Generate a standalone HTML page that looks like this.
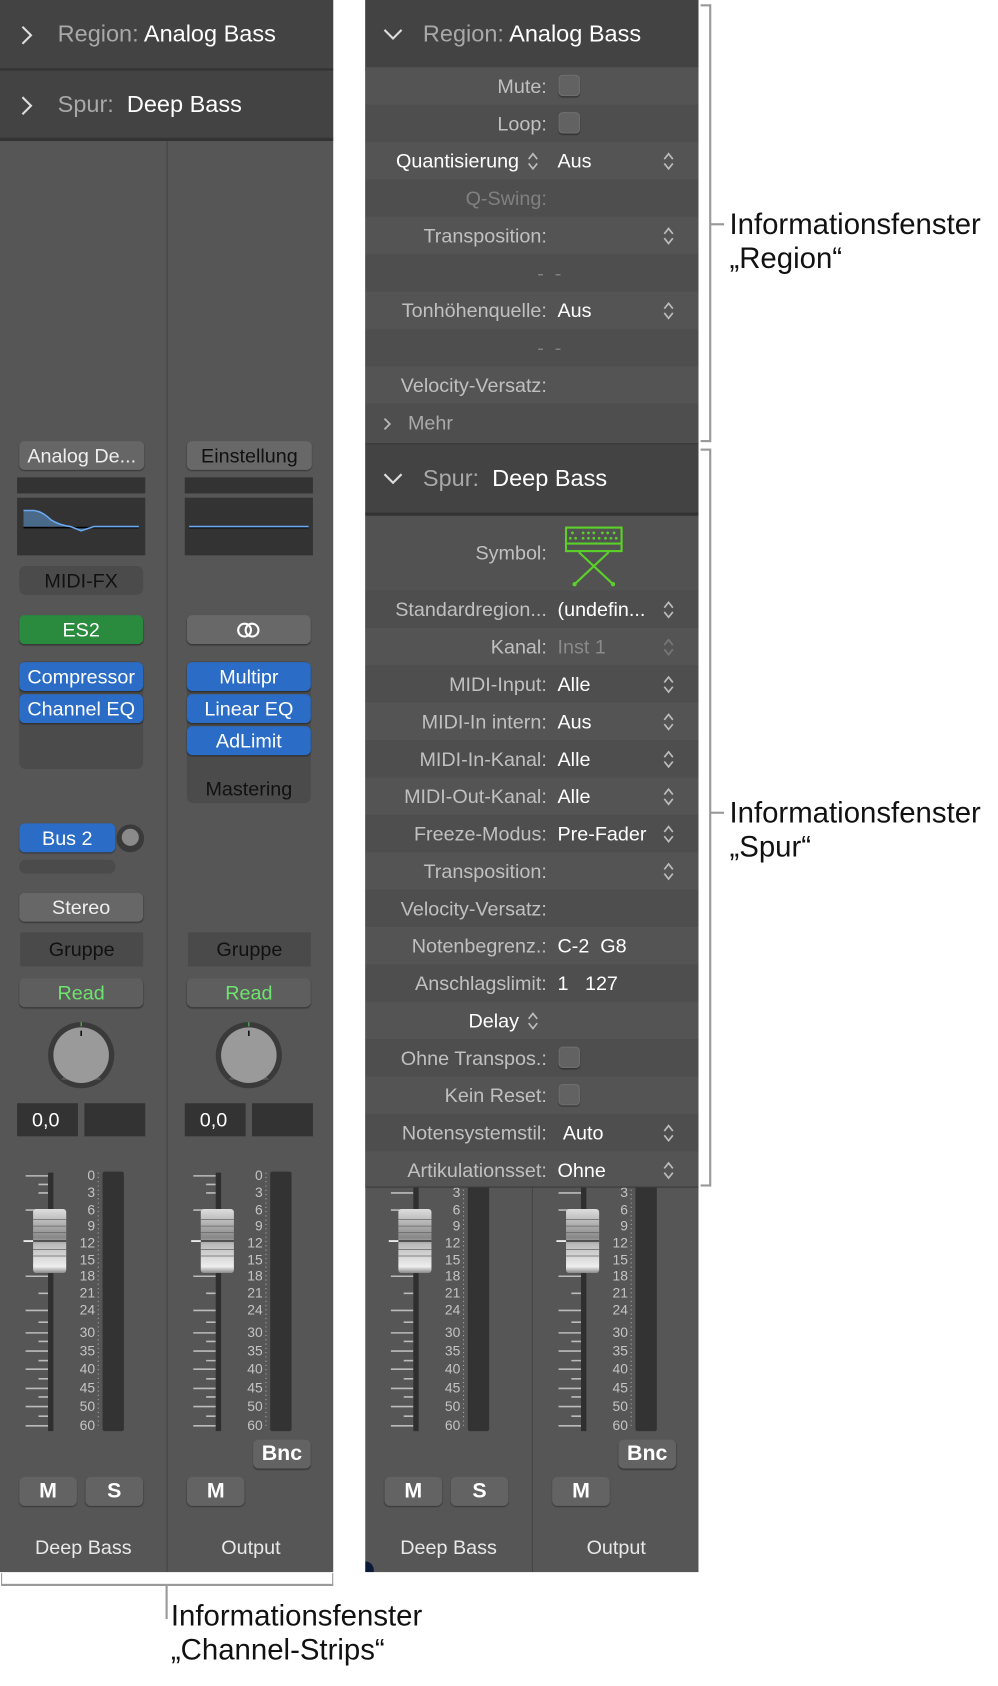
<!DOCTYPE html>
<html><head><meta charset="utf-8">
<style>
html,body{margin:0;padding:0;background:#fff;width:998px;height:1676px;overflow:hidden}
#s{position:absolute;left:0;top:0;width:940px;height:1579px;transform:scale(1.068);transform-origin:0 0;font-family:"Liberation Sans","DejaVu Sans",sans-serif}
.a{position:absolute}
.panel{position:absolute;top:0;width:312px;height:1472px;background:#565656;overflow:hidden}
.hd{position:absolute;left:0;width:312px;background:#434343;color:#fff;font-size:22px;border-bottom:2px solid #333;box-sizing:border-box}
.hd .t{position:absolute;left:54px;top:50%;transform:translateY(-50%);white-space:nowrap}
.hd .g{color:#a8a8a8}
.btn{position:absolute;border-radius:5px;text-align:center;font-size:18.5px;line-height:27px;height:27px;box-shadow:0 1px 1px rgba(0,0,0,.35);white-space:nowrap;overflow:hidden}
.gr{background:#686868;color:#111}
.dk{background:#333;position:absolute}
.bl{background:#2a6cc6;color:#fff}
.box{position:absolute;background:#4b4b4b;border-radius:6px}
.lbl{position:absolute;color:#e8e8e8;font-size:18.5px;text-align:center}
.row{position:absolute;left:0;width:312px;height:35px;font-size:18.5px;line-height:35px}
.row .l{position:absolute;right:142px;color:#c0c0c0;white-space:nowrap}
.row .v{position:absolute;left:180px;color:#fff;white-space:nowrap}
.row .dim{color:#808080}
.cb{position:absolute;left:181px;top:7px;width:20px;height:20px;border-radius:4px;background:#626262;box-shadow:inset 0 0 0 1px #6e6e6e,0 1px 1px #333}
.st{position:absolute;left:278px;top:9px}
.ann{position:absolute;font-size:27.5px;color:#111;line-height:32px;white-space:nowrap}
</style></head><body><div id="s">

<!-- ============ LEFT PANEL ============ -->
<div class="panel" style="left:0">
  <div class="a" style="left:156px;top:130px;width:1px;height:1342px;background:#444"></div>
  <div class="hd" style="top:0;height:66px"><svg class="a" style="left:18px;top:23px" width="14" height="20"><path d="M3 2 L11 10 L3 18" fill="none" stroke="#ddd" stroke-width="2"/></svg><div class="t"><span class="g">Region: </span>Analog Bass</div></div>
  <div class="hd" style="top:66px;height:66px;border-bottom:3px solid #333"><svg class="a" style="left:18px;top:23px" width="14" height="20"><path d="M3 2 L11 10 L3 18" fill="none" stroke="#ddd" stroke-width="2"/></svg><div class="t"><span class="g">Spur: </span>&nbsp;Deep Bass</div></div>

  <!-- strip 1 -->
  <div class="btn gr" style="left:18px;top:413px;width:117px;color:#eee;background:#666">Analog De...</div>
  <div class="dk" style="left:16px;top:447px;width:120px;height:15px"></div>
  <div class="dk" style="left:16px;top:466px;width:120px;height:54px"></div>
  <svg class="a" style="left:16px;top:466px" width="120" height="54"><path d="M6 12 L16 12 Q24 13 32 21 Q40 26 50 27 L60 31 Q66 29 72 27 L114 27 L114 28 L6 28Z" fill="#4a6a8a"/><path d="M6 28 L114 28" stroke="#000" stroke-width="1.5"/><path d="M6 12 L16 12 Q24 13 32 21 Q40 26 50 27 L60 31 Q66 29 72 27 L114 27" fill="none" stroke="#6aa8f0" stroke-width="1.5"/></svg>
  <div class="box" style="left:18px;top:530px;width:116px;height:27px;text-align:center;font-size:18.5px;line-height:27px;color:#111">MIDI-FX</div>
  <div class="btn" style="left:18px;top:576px;width:116px;background:#2a8a3e;color:#fff">ES2</div>
  <div class="box" style="left:18px;top:619px;width:116px;height:101px"></div>
  <div class="btn bl" style="left:18px;top:620px;width:116px">Compressor</div>
  <div class="btn bl" style="left:18px;top:650px;width:116px">Channel EQ</div>
  <div class="btn bl" style="left:18px;top:771px;width:90px">Bus 2</div>
  <div class="a" style="left:109px;top:772px;width:26px;height:26px;border-radius:50%;background:#3a3a3a"></div>
  <div class="a" style="left:114px;top:776px;width:16px;height:16px;border-radius:50%;background:#8a8a8a"></div>
  <div class="box" style="left:18px;top:805px;width:90px;height:13px;border-radius:6px"></div>
  <div class="btn" style="left:18px;top:836px;width:116px;background:#676767;color:#eee">Stereo</div>
  <div class="a" style="left:19px;top:873px;width:115px;height:32px;background:#4a4a4a;color:#111;font-size:18.5px;line-height:32px;text-align:center">Gruppe</div>
  <div class="btn" style="left:18px;top:916px;width:116px;background:#5e5e5e;color:#6ee46e">Read</div>
  <svg class="a" style="left:44px;top:956px" width="64" height="64"><circle cx="32" cy="32" r="31" fill="#3a3a3a"/><path d="M13 55 L22 46 A 18 18 0 0 0 42 46 L51 55 Z" fill="#565656"/><circle cx="32" cy="32" r="26" fill="#9a9a9a"/><line x1="32" y1="9" x2="32" y2="14" stroke="#111" stroke-width="1.5"/><line x1="32" y1="1" x2="32" y2="5" stroke="#5c5"/></svg>
  <div class="dk" style="left:16px;top:1033px;width:57px;height:31px;color:#fff;font-size:18.5px;line-height:31px;padding-left:14px;box-sizing:border-box">0,0</div>
  <div class="dk" style="left:79px;top:1033px;width:57px;height:31px"></div>
  <svg class="a" style="left:0;top:1090px" width="156" height="260">
    <g stroke="#bbb" stroke-width="1.5"><line x1="24" y1="11" x2="45" y2="11"/><line x1="36" y1="19" x2="45" y2="19"/><line x1="36" y1="27" x2="45" y2="27"/><line x1="24" y1="43" x2="45" y2="43"/><line x1="36" y1="58" x2="45" y2="58"/><line x1="36" y1="74" x2="45" y2="74"/><line x1="24" y1="105" x2="45" y2="105"/><line x1="36" y1="121" x2="45" y2="121"/><line x1="24" y1="137" x2="45" y2="137"/><line x1="36" y1="148" x2="45" y2="148"/><line x1="24" y1="158" x2="45" y2="158"/><line x1="36" y1="166" x2="45" y2="166"/><line x1="24" y1="175" x2="45" y2="175"/><line x1="36" y1="184" x2="45" y2="184"/><line x1="24" y1="192" x2="45" y2="192"/><line x1="36" y1="201" x2="45" y2="201"/><line x1="24" y1="210" x2="45" y2="210"/><line x1="36" y1="218" x2="45" y2="218"/><line x1="24" y1="227" x2="45" y2="227"/><line x1="36" y1="236" x2="45" y2="236"/><line x1="24" y1="245" x2="45" y2="245"/></g>
    <rect x="45" y="8" width="5" height="242" fill="#2f2f2f"/>
    <defs><linearGradient id="fc" x1="0" y1="0" x2="0" y2="1"><stop offset="0" stop-color="#ddd"/><stop offset=".45" stop-color="#888"/><stop offset=".55" stop-color="#bbb"/><stop offset=".9" stop-color="#eee"/><stop offset="1" stop-color="#888"/></linearGradient></defs>
    <rect x="31" y="42" width="31" height="60" rx="3" fill="url(#fc)"/>
    <g stroke="#666" stroke-width=".7"><line x1="31" y1="52" x2="62" y2="52"/><line x1="31" y1="58" x2="62" y2="58"/><line x1="31" y1="64" x2="62" y2="64"/><line x1="31" y1="80" x2="62" y2="80"/><line x1="31" y1="86" x2="62" y2="86"/></g>
    <line x1="31" y1="72" x2="62" y2="72" stroke="#222" stroke-width="1.2"/><line x1="22" y1="72" x2="31" y2="72" stroke="#fff" stroke-width="1.5"/>
    <g fill="#c4c4c4" font-size="13" text-anchor="end" font-family="Liberation Sans,sans-serif"><text x="89" y="15">0</text><text x="89" y="31">3</text><text x="89" y="47">6</text><text x="89" y="62">9</text><text x="89" y="78">12</text><text x="89" y="94">15</text><text x="89" y="109">18</text><text x="89" y="125">21</text><text x="89" y="141">24</text><text x="89" y="162">30</text><text x="89" y="179">35</text><text x="89" y="196">40</text><text x="89" y="214">45</text><text x="89" y="231">50</text><text x="89" y="249">60</text></g>
    <line x1="92" y1="8" x2="92" y2="248" stroke="#aaa" stroke-dasharray="1 3"/>
    <rect x="96" y="7" width="20" height="243" rx="2" fill="#333"/>
  </svg>
  <div class="btn gr" style="left:18px;top:1383px;width:54px;color:#fff;font-weight:bold;font-size:20px;background:#636363">M</div>
  <div class="btn gr" style="left:80px;top:1383px;width:54px;color:#fff;font-weight:bold;font-size:20px;background:#636363">S</div>
  <div class="lbl" style="left:0;top:1438px;width:156px">Deep Bass</div>

  <!-- strip 2 -->
  <div class="btn gr" style="left:175px;top:413px;width:117px;color:#111">Einstellung</div>
  <div class="dk" style="left:173px;top:447px;width:120px;height:15px"></div>
  <div class="dk" style="left:173px;top:466px;width:120px;height:54px"></div>
  <svg class="a" style="left:173px;top:466px" width="120" height="54"><path d="M4 28 L116 28" stroke="#000" stroke-width="1.5"/><path d="M4 27 L116 27" stroke="#6aa8f0" stroke-width="1.5"/></svg>
  <div class="btn" style="left:175px;top:576px;width:116px;background:#686868"><svg width="26" height="20" style="margin-top:4px"><circle cx="9" cy="10" r="6" fill="none" stroke="#fff" stroke-width="2"/><circle cx="16" cy="10" r="6" fill="none" stroke="#fff" stroke-width="2"/></svg></div>
  <div class="box" style="left:175px;top:619px;width:116px;height:133px;color:#111;font-size:18.5px;text-align:center;line-height:20px"><div class="a" style="left:0;width:116px;top:110px">Mastering</div></div>
  <div class="btn bl" style="left:175px;top:620px;width:116px">Multipr</div>
  <div class="btn bl" style="left:175px;top:650px;width:116px">Linear EQ</div>
  <div class="btn bl" style="left:175px;top:680px;width:116px">AdLimit</div>
  <div class="a" style="left:176px;top:873px;width:115px;height:32px;background:#4a4a4a;color:#111;font-size:18.5px;line-height:32px;text-align:center">Gruppe</div>
  <div class="btn" style="left:175px;top:916px;width:116px;background:#5e5e5e;color:#6ee46e">Read</div>
  <svg class="a" style="left:201px;top:956px" width="64" height="64"><circle cx="32" cy="32" r="31" fill="#3a3a3a"/><path d="M13 55 L22 46 A 18 18 0 0 0 42 46 L51 55 Z" fill="#565656"/><circle cx="32" cy="32" r="26" fill="#9a9a9a"/><line x1="32" y1="9" x2="32" y2="14" stroke="#111" stroke-width="1.5"/><line x1="32" y1="1" x2="32" y2="5" stroke="#5c5"/></svg>
  <div class="dk" style="left:173px;top:1033px;width:57px;height:31px;color:#fff;font-size:18.5px;line-height:31px;padding-left:14px;box-sizing:border-box">0,0</div>
  <div class="dk" style="left:236px;top:1033px;width:57px;height:31px"></div>
  <svg class="a" style="left:157px;top:1090px" width="156" height="260">
    <g stroke="#bbb" stroke-width="1.5"><line x1="24" y1="11" x2="45" y2="11"/><line x1="36" y1="19" x2="45" y2="19"/><line x1="36" y1="27" x2="45" y2="27"/><line x1="24" y1="43" x2="45" y2="43"/><line x1="36" y1="58" x2="45" y2="58"/><line x1="36" y1="74" x2="45" y2="74"/><line x1="24" y1="105" x2="45" y2="105"/><line x1="36" y1="121" x2="45" y2="121"/><line x1="24" y1="137" x2="45" y2="137"/><line x1="36" y1="148" x2="45" y2="148"/><line x1="24" y1="158" x2="45" y2="158"/><line x1="36" y1="166" x2="45" y2="166"/><line x1="24" y1="175" x2="45" y2="175"/><line x1="36" y1="184" x2="45" y2="184"/><line x1="24" y1="192" x2="45" y2="192"/><line x1="36" y1="201" x2="45" y2="201"/><line x1="24" y1="210" x2="45" y2="210"/><line x1="36" y1="218" x2="45" y2="218"/><line x1="24" y1="227" x2="45" y2="227"/><line x1="36" y1="236" x2="45" y2="236"/><line x1="24" y1="245" x2="45" y2="245"/></g>
    <rect x="45" y="8" width="5" height="242" fill="#2f2f2f"/>
    <rect x="31" y="42" width="31" height="60" rx="3" fill="url(#fc)"/>
    <g stroke="#666" stroke-width=".7"><line x1="31" y1="52" x2="62" y2="52"/><line x1="31" y1="58" x2="62" y2="58"/><line x1="31" y1="64" x2="62" y2="64"/><line x1="31" y1="80" x2="62" y2="80"/><line x1="31" y1="86" x2="62" y2="86"/></g>
    <line x1="31" y1="72" x2="62" y2="72" stroke="#222" stroke-width="1.2"/><line x1="22" y1="72" x2="31" y2="72" stroke="#fff" stroke-width="1.5"/>
    <g fill="#c4c4c4" font-size="13" text-anchor="end" font-family="Liberation Sans,sans-serif"><text x="89" y="15">0</text><text x="89" y="31">3</text><text x="89" y="47">6</text><text x="89" y="62">9</text><text x="89" y="78">12</text><text x="89" y="94">15</text><text x="89" y="109">18</text><text x="89" y="125">21</text><text x="89" y="141">24</text><text x="89" y="162">30</text><text x="89" y="179">35</text><text x="89" y="196">40</text><text x="89" y="214">45</text><text x="89" y="231">50</text><text x="89" y="249">60</text></g>
    <line x1="92" y1="8" x2="92" y2="248" stroke="#aaa" stroke-dasharray="1 3"/>
    <rect x="96" y="7" width="20" height="243" rx="2" fill="#333"/>
  </svg>
  <div class="btn gr" style="left:237px;top:1348px;width:54px;color:#fff;font-weight:bold;font-size:20px;background:#636363">Bnc</div>
  <div class="btn gr" style="left:175px;top:1383px;width:54px;color:#fff;font-weight:bold;font-size:20px;background:#636363">M</div>
  <div class="lbl" style="left:157px;top:1438px;width:156px">Output</div>
</div>

<!-- bracket bottom -->
<div class="a" style="left:1px;top:1473px;width:1px;height:11px;background:#999"></div>
<div class="a" style="left:311px;top:1473px;width:1px;height:11px;background:#999"></div>
<div class="a" style="left:1px;top:1483px;width:311px;height:2px;background:#999"></div>
<div class="a" style="left:155px;top:1484px;width:2px;height:32px;background:#999"></div>
<div class="ann" style="left:160px;top:1497px">Informationsfenster<br>„Channel-Strips“</div>

<!-- ============ RIGHT PANEL ============ -->
<div class="panel" style="left:342px">
  <div class="a" style="left:156px;top:1111px;width:1px;height:361px;background:#444"></div>
  <svg class="a" style="left:0;top:1090px" width="156" height="260">
    <g stroke="#bbb" stroke-width="1.5"><line x1="24" y1="27" x2="45" y2="27"/><line x1="24" y1="43" x2="45" y2="43"/><line x1="36" y1="58" x2="45" y2="58"/><line x1="36" y1="74" x2="45" y2="74"/><line x1="24" y1="105" x2="45" y2="105"/><line x1="36" y1="121" x2="45" y2="121"/><line x1="24" y1="137" x2="45" y2="137"/><line x1="36" y1="148" x2="45" y2="148"/><line x1="24" y1="158" x2="45" y2="158"/><line x1="36" y1="166" x2="45" y2="166"/><line x1="24" y1="175" x2="45" y2="175"/><line x1="36" y1="184" x2="45" y2="184"/><line x1="24" y1="192" x2="45" y2="192"/><line x1="36" y1="201" x2="45" y2="201"/><line x1="24" y1="210" x2="45" y2="210"/><line x1="36" y1="218" x2="45" y2="218"/><line x1="24" y1="227" x2="45" y2="227"/><line x1="36" y1="236" x2="45" y2="236"/><line x1="24" y1="245" x2="45" y2="245"/></g>
    <rect x="45" y="8" width="5" height="242" fill="#2f2f2f"/>
    <rect x="31" y="42" width="31" height="60" rx="3" fill="url(#fc)"/>
    <g stroke="#666" stroke-width=".7"><line x1="31" y1="52" x2="62" y2="52"/><line x1="31" y1="58" x2="62" y2="58"/><line x1="31" y1="64" x2="62" y2="64"/><line x1="31" y1="80" x2="62" y2="80"/><line x1="31" y1="86" x2="62" y2="86"/></g>
    <line x1="31" y1="72" x2="62" y2="72" stroke="#222" stroke-width="1.2"/><line x1="22" y1="72" x2="31" y2="72" stroke="#fff" stroke-width="1.5"/>
    <g fill="#c4c4c4" font-size="13" text-anchor="end" font-family="Liberation Sans,sans-serif"><text x="89" y="31">3</text><text x="89" y="47">6</text><text x="89" y="62">9</text><text x="89" y="78">12</text><text x="89" y="94">15</text><text x="89" y="109">18</text><text x="89" y="125">21</text><text x="89" y="141">24</text><text x="89" y="162">30</text><text x="89" y="179">35</text><text x="89" y="196">40</text><text x="89" y="214">45</text><text x="89" y="231">50</text><text x="89" y="249">60</text></g>
    <line x1="92" y1="8" x2="92" y2="248" stroke="#aaa" stroke-dasharray="1 3"/>
    <rect x="96" y="7" width="20" height="243" rx="2" fill="#333"/>
  </svg>
  <svg class="a" style="left:157px;top:1090px" width="156" height="260">
    <g stroke="#bbb" stroke-width="1.5"><line x1="24" y1="27" x2="45" y2="27"/><line x1="24" y1="43" x2="45" y2="43"/><line x1="36" y1="58" x2="45" y2="58"/><line x1="36" y1="74" x2="45" y2="74"/><line x1="24" y1="105" x2="45" y2="105"/><line x1="36" y1="121" x2="45" y2="121"/><line x1="24" y1="137" x2="45" y2="137"/><line x1="36" y1="148" x2="45" y2="148"/><line x1="24" y1="158" x2="45" y2="158"/><line x1="36" y1="166" x2="45" y2="166"/><line x1="24" y1="175" x2="45" y2="175"/><line x1="36" y1="184" x2="45" y2="184"/><line x1="24" y1="192" x2="45" y2="192"/><line x1="36" y1="201" x2="45" y2="201"/><line x1="24" y1="210" x2="45" y2="210"/><line x1="36" y1="218" x2="45" y2="218"/><line x1="24" y1="227" x2="45" y2="227"/><line x1="36" y1="236" x2="45" y2="236"/><line x1="24" y1="245" x2="45" y2="245"/></g>
    <rect x="45" y="8" width="5" height="242" fill="#2f2f2f"/>
    <rect x="31" y="42" width="31" height="60" rx="3" fill="url(#fc)"/>
    <g stroke="#666" stroke-width=".7"><line x1="31" y1="52" x2="62" y2="52"/><line x1="31" y1="58" x2="62" y2="58"/><line x1="31" y1="64" x2="62" y2="64"/><line x1="31" y1="80" x2="62" y2="80"/><line x1="31" y1="86" x2="62" y2="86"/></g>
    <line x1="31" y1="72" x2="62" y2="72" stroke="#222" stroke-width="1.2"/><line x1="22" y1="72" x2="31" y2="72" stroke="#fff" stroke-width="1.5"/>
    <g fill="#c4c4c4" font-size="13" text-anchor="end" font-family="Liberation Sans,sans-serif"><text x="89" y="31">3</text><text x="89" y="47">6</text><text x="89" y="62">9</text><text x="89" y="78">12</text><text x="89" y="94">15</text><text x="89" y="109">18</text><text x="89" y="125">21</text><text x="89" y="141">24</text><text x="89" y="162">30</text><text x="89" y="179">35</text><text x="89" y="196">40</text><text x="89" y="214">45</text><text x="89" y="231">50</text><text x="89" y="249">60</text></g>
    <line x1="92" y1="8" x2="92" y2="248" stroke="#aaa" stroke-dasharray="1 3"/>
    <rect x="96" y="7" width="20" height="243" rx="2" fill="#333"/>
  </svg>
  <div class="btn gr" style="left:237px;top:1348px;width:54px;color:#fff;font-weight:bold;font-size:20px;background:#636363">Bnc</div>
  <div class="btn gr" style="left:18px;top:1383px;width:54px;color:#fff;font-weight:bold;font-size:20px;background:#636363">M</div>
  <div class="btn gr" style="left:80px;top:1383px;width:54px;color:#fff;font-weight:bold;font-size:20px;background:#636363">S</div>
  <div class="btn gr" style="left:175px;top:1383px;width:54px;color:#fff;font-weight:bold;font-size:20px;background:#636363">M</div>
  <div class="lbl" style="left:0;top:1438px;width:156px">Deep Bass</div>
  <div class="lbl" style="left:157px;top:1438px;width:156px">Output</div>
  <div class="a" style="left:0;top:1462px;width:8px;height:10px;background:#0c1a3a;border-top-right-radius:8px"></div>

  <!-- inspector overlay -->
  <div class="a" style="left:0;top:0;width:312px;height:1111px;background:#505050;border-bottom:1px solid #3a3a3a"></div>
  <div class="hd" style="top:0;height:66px"><svg class="a" style="left:16px;top:25px" width="20" height="14"><path d="M2 3 L10 11 L18 3" fill="none" stroke="#ddd" stroke-width="2"/></svg><div class="t"><span class="g">Region: </span>Analog Bass</div></div>

  <div class="row" style="top:63px;background:#545454"><span class="l">Mute:</span><span class="cb"></span></div>
  <div class="row" style="top:98px;background:#4e4e4e"><span class="l">Loop:</span><span class="cb"></span></div>
  <div class="row" style="top:133px;background:#545454"><span class="l" style="right:168px;color:#fff">Quantisierung</span><svg class="st" style="left:151px" width="12" height="18"><path d="M2 7 L6 2 L10 7 M2 11 L6 16 L10 11" fill="none" stroke="#bbb" stroke-width="1.6"/></svg><span class="v">Aus</span><svg class="st" width="12" height="18"><path d="M2 7 L6 2 L10 7 M2 11 L6 16 L10 11" fill="none" stroke="#bbb" stroke-width="1.6"/></svg></div>
  <div class="row" style="top:168px;background:#4e4e4e"><span class="l dim">Q-Swing:</span></div>
  <div class="row" style="top:203px;background:#545454"><span class="l">Transposition:</span><svg class="st" width="12" height="18"><path d="M2 7 L6 2 L10 7 M2 11 L6 16 L10 11" fill="none" stroke="#bbb" stroke-width="1.6"/></svg></div>
  <div class="row" style="top:238px;background:#4e4e4e"><span class="a dim" style="left:161px;color:#808080">-&nbsp;&nbsp;-</span></div>
  <div class="row" style="top:273px;background:#545454"><span class="l">Tonhöhenquelle:</span><span class="v">Aus</span><svg class="st" width="12" height="18"><path d="M2 7 L6 2 L10 7 M2 11 L6 16 L10 11" fill="none" stroke="#bbb" stroke-width="1.6"/></svg></div>
  <div class="row" style="top:308px;background:#4e4e4e"><span class="a" style="left:161px;color:#808080">-&nbsp;&nbsp;-</span></div>
  <div class="row" style="top:343px;background:#545454"><span class="l">Velocity-Versatz:</span></div>
  <div class="row" style="top:378px;background:#4e4e4e;height:37px"><svg class="a" style="left:16px;top:12px" width="10" height="14"><path d="M2 2 L7 7 L2 12" fill="none" stroke="#bbb" stroke-width="1.6"/></svg><span class="a" style="left:40px;color:#aaa">Mehr</span></div>

  <div class="hd" style="top:415px;height:68px;border-top:1px solid #3a3a3a;border-bottom:3px solid #333"><svg class="a" style="left:16px;top:25px" width="20" height="14"><path d="M2 3 L10 11 L18 3" fill="none" stroke="#ddd" stroke-width="2"/></svg><div class="t"><span class="g">Spur: </span>&nbsp;Deep Bass</div></div>

  <div class="row" style="top:483px;height:70px;background:#525252;line-height:70px"><span class="l">Symbol:</span>
    <svg class="a" style="left:186px;top:9px" width="56" height="58"><rect x="2" y="2" width="52" height="22" fill="none" stroke="#5bd02a" stroke-width="2"/><line x1="3" y1="17" x2="53" y2="17" stroke="#5bd02a" stroke-width="2"/><g fill="#5bd02a"><circle cx="8" cy="7" r="1.3"/><circle cx="18" cy="7" r="1.3"/><circle cx="23" cy="7" r="1.3"/><circle cx="28" cy="7" r="1.3"/><circle cx="36" cy="7" r="1.3"/><circle cx="41" cy="7" r="1.3"/><circle cx="47" cy="7" r="1.3"/><circle cx="6" cy="12" r="1.3"/><circle cx="11" cy="12" r="1.3"/><circle cx="18" cy="12" r="1.3"/><circle cx="23" cy="12" r="1.3"/><circle cx="28" cy="12" r="1.3"/><circle cx="33" cy="12" r="1.3"/><circle cx="39" cy="12" r="1.3"/><circle cx="44" cy="12" r="1.3"/><circle cx="49" cy="12" r="1.3"/><circle cx="10" cy="55" r="2"/><circle cx="46" cy="55" r="2"/></g><path d="M14 25 L46 55 M42 25 L10 55" stroke="#5bd02a" stroke-width="2"/></svg></div>

  <div class="row" style="top:553px;background:#4e4e4e"><span class="l">Standardregion...</span><span class="v">(undefin...</span><svg class="st" width="12" height="18"><path d="M2 7 L6 2 L10 7 M2 11 L6 16 L10 11" fill="none" stroke="#bbb" stroke-width="1.6"/></svg></div>
  <div class="row" style="top:588px;background:#545454"><span class="l">Kanal:</span><span class="v dim" style="color:#8a8a8a">Inst 1</span><svg class="st" width="12" height="18"><path d="M2 7 L6 2 L10 7 M2 11 L6 16 L10 11" fill="none" stroke="#777" stroke-width="1.6"/></svg></div>
  <div class="row" style="top:623px;background:#4e4e4e"><span class="l">MIDI-Input:</span><span class="v">Alle</span><svg class="st" width="12" height="18"><path d="M2 7 L6 2 L10 7 M2 11 L6 16 L10 11" fill="none" stroke="#bbb" stroke-width="1.6"/></svg></div>
  <div class="row" style="top:658px;background:#545454"><span class="l">MIDI-In intern:</span><span class="v">Aus</span><svg class="st" width="12" height="18"><path d="M2 7 L6 2 L10 7 M2 11 L6 16 L10 11" fill="none" stroke="#bbb" stroke-width="1.6"/></svg></div>
  <div class="row" style="top:693px;background:#4e4e4e"><span class="l">MIDI-In-Kanal:</span><span class="v">Alle</span><svg class="st" width="12" height="18"><path d="M2 7 L6 2 L10 7 M2 11 L6 16 L10 11" fill="none" stroke="#bbb" stroke-width="1.6"/></svg></div>
  <div class="row" style="top:728px;background:#545454"><span class="l">MIDI-Out-Kanal:</span><span class="v">Alle</span><svg class="st" width="12" height="18"><path d="M2 7 L6 2 L10 7 M2 11 L6 16 L10 11" fill="none" stroke="#bbb" stroke-width="1.6"/></svg></div>
  <div class="row" style="top:763px;background:#4e4e4e"><span class="l">Freeze-Modus:</span><span class="v">Pre-Fader</span><svg class="st" width="12" height="18"><path d="M2 7 L6 2 L10 7 M2 11 L6 16 L10 11" fill="none" stroke="#bbb" stroke-width="1.6"/></svg></div>
  <div class="row" style="top:798px;background:#545454"><span class="l">Transposition:</span><svg class="st" width="12" height="18"><path d="M2 7 L6 2 L10 7 M2 11 L6 16 L10 11" fill="none" stroke="#bbb" stroke-width="1.6"/></svg></div>
  <div class="row" style="top:833px;background:#4e4e4e"><span class="l">Velocity-Versatz:</span></div>
  <div class="row" style="top:868px;background:#545454"><span class="l">Notenbegrenz.:</span><span class="v">C-2&nbsp;&nbsp;G8</span></div>
  <div class="row" style="top:903px;background:#4e4e4e"><span class="l">Anschlagslimit:</span><span class="v">1&nbsp;&nbsp;&nbsp;127</span></div>
  <div class="row" style="top:938px;background:#545454"><span class="l" style="right:168px;color:#fff">Delay</span><svg class="st" style="left:151px" width="12" height="18"><path d="M2 7 L6 2 L10 7 M2 11 L6 16 L10 11" fill="none" stroke="#bbb" stroke-width="1.6"/></svg></div>
  <div class="row" style="top:973px;background:#4e4e4e"><span class="l">Ohne Transpos.:</span><span class="cb"></span></div>
  <div class="row" style="top:1008px;background:#545454"><span class="l">Kein Reset:</span><span class="cb"></span></div>
  <div class="row" style="top:1043px;background:#4e4e4e"><span class="l">Notensystemstil:</span><span class="v" style="left:185px">Auto</span><svg class="st" width="12" height="18"><path d="M2 7 L6 2 L10 7 M2 11 L6 16 L10 11" fill="none" stroke="#bbb" stroke-width="1.6"/></svg></div>
  <div class="row" style="top:1078px;background:#545454;height:33px"><span class="l">Artikulationsset:</span><span class="v">Ohne</span><svg class="st" width="12" height="18"><path d="M2 7 L6 2 L10 7 M2 11 L6 16 L10 11" fill="none" stroke="#bbb" stroke-width="1.6"/></svg></div>
</div>

<!-- right brackets -->
<div class="a" style="left:656px;top:4px;width:9px;height:2px;background:#999"></div>
<div class="a" style="left:664px;top:4px;width:2px;height:410px;background:#999"></div>
<div class="a" style="left:656px;top:412px;width:9px;height:2px;background:#999"></div>
<div class="a" style="left:665px;top:209px;width:13px;height:2px;background:#999"></div>
<div class="ann" style="left:683px;top:194px">Informationsfenster<br>„Region“</div>

<div class="a" style="left:656px;top:420px;width:9px;height:2px;background:#999"></div>
<div class="a" style="left:664px;top:420px;width:2px;height:691px;background:#999"></div>
<div class="a" style="left:656px;top:1109px;width:9px;height:2px;background:#999"></div>
<div class="a" style="left:665px;top:760px;width:13px;height:2px;background:#999"></div>
<div class="ann" style="left:683px;top:745px">Informationsfenster<br>„Spur“</div>

</div></body></html>
